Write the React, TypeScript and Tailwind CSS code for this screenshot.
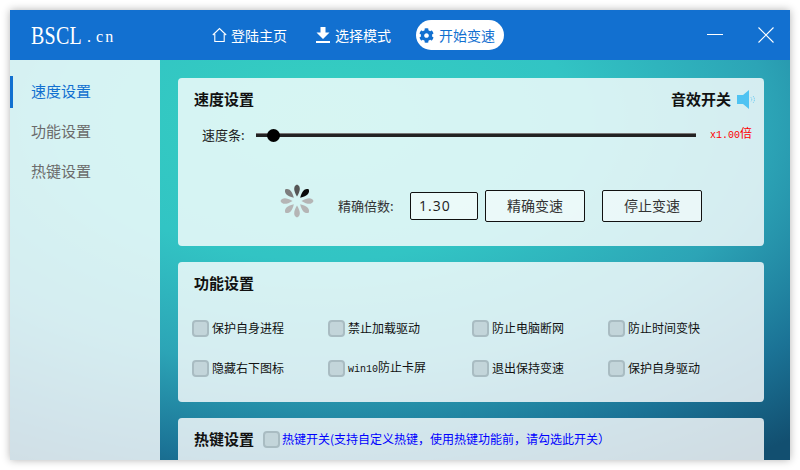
import React from "react";
import { FaCog } from "react-icons/fa";

const cjk = "font-['Microsoft_YaHei','Noto_Sans_CJK_SC',sans-serif]";

function Petals() {
  const shades = ["#555555", "#0a0a0a", "#b5b5b5", "#b5b5b5", "#b5b5b5", "#b5b5b5", "#b5b5b5", "#7d7d7d"];
  return (
    <svg width="34" height="34" viewBox="-17 -17 34 34" className="mb-[10px]">
      {shades.map((c, i) => (
        <path key={i} d="M0 -16.500 C3.500 -15 4 -11 0 -4.500 C-4 -11 -3.500 -15 0 -16.500Z" fill={c} transform={`rotate(${i * 45})`} />
      ))}
    </svg>
  );
}

function Box({ className = "" }: { className?: string }) {
  return <span className={`w-[17px] h-[17px] rounded-[4px] bg-[#c3d5da] border-2 border-[#a9bcc2] shrink-0 ${className}`} />;
}

function Check({ label }: { label: React.ReactNode }) {
  return (
    <div className="flex items-center gap-[3px] h-[18px]">
      <Box />
      <span className="text-[12px] leading-[18px] text-[#111] whitespace-nowrap">{label}</span>
    </div>
  );
}

const hotkeyText = "\u70ED\u952E\u5F00\u5173(\u652F\u6301\u81EA\u5B9A\u4E49\u70ED\u952E\uFF0C\u4F7F\u7528\u70ED\u952E\u529F\u80FD\u524D\uFF0C\u8BF7\u52FE\u9009\u6B64\u5F00\u5173\uFF09";

export default function App() {
  return (
    <div className={`w-[800px] h-[470px] bg-white p-[10px] ${cjk}`}>
      <div className="w-[780px] h-[450px] flex flex-col overflow-hidden shadow-[0_0_8px_rgba(0,0,0,0.3)]">
        <header className="h-[50px] shrink-0 bg-[#1270d0] flex items-center text-white">
          <div className="w-[190px] pl-[21px] flex items-baseline font-['Liberation_Serif',serif]">
            <span className="text-[20px] tracking-[0.25px] inline-block scale-y-[1.25]">BSCL</span>
            <span className="text-[16px] ml-[5px]">.</span>
            <span className="text-[16px] ml-[5px] tracking-[2px]">cn</span>
          </div>
          <div className="flex items-center gap-[4px] text-[14px] w-[104px] ml-[12px]">
            <svg width="15" height="16" viewBox="0 0 15 16" fill="none" stroke="white" strokeWidth="1.1">
              <path d="M.8 8 7.500 1.500 14.200 8M2.800 7v7.500h9.400V7" />
            </svg>
            <span>登陆主页</span>
          </div>
          <div className="flex items-center gap-[5px] text-[14px] w-[100px]">
            <svg width="14" height="16" viewBox="0 0 14 16" fill="white">
              <path d="M4.500 0h5v5.500h4L7 12 .5 5.500h4zM0 14h14v2H0z" />
            </svg>
            <span>选择模式</span>
          </div>
          <div className="h-[30px] w-[88px] rounded-full bg-white text-[#1270d0] flex items-center gap-[5px] pl-[3px] text-[14px]">
            <FaCog size={15} color="#1270d0" />
            <span>开始变速</span>
          </div>
          <div className="flex-1 flex items-center justify-end pr-[16px] gap-[35px]">
            <span className="w-[16px] h-px bg-white mb-[2px]" />
            <svg width="16" height="16" viewBox="0 0 16 16" stroke="white" strokeWidth="1.1">
              <path d="M.5.5l15 15M15.500.5l-15 15" />
            </svg>
          </div>
        </header>
        <div className="flex-1 min-h-0 flex bg-[radial-gradient(ellipse_720px_400px_at_40%_15%,#35cfc0_0%,#32c4c4_35%,#2ca4b6_62%,#1b7396_85%,#124f70_103%)]">
          <nav className="w-[150px] shrink-0 bg-white/80 pt-[16px] text-[15px] text-[#6b6b6b] flex flex-col gap-[8px]">
            <div className="h-[32px] border-l-[3px] border-[#1270d0] pl-[18px] pb-[2px] flex items-center text-[#1270d0]">速度设置</div>
            <div className="h-[32px] pl-[21px] pb-[2px] flex items-center">功能设置</div>
            <div className="h-[32px] pl-[21px] pb-[2px] flex items-center">热键设置</div>
          </nav>
          <main className="flex-1 min-w-0 pt-[18px] pl-[18px] pr-[26px] flex flex-col gap-[16px]">
            <section className="h-[168px] shrink-0 rounded-[4px] bg-white/80 pt-[10px] pl-[16px] pr-[8px] flex flex-col">
              <div className="flex items-center justify-between">
                <h2 className="text-[15px] font-bold text-[#111] leading-[22px]">速度设置</h2>
                <div className="flex items-center gap-[6px]">
                  <span className="text-[15px] font-bold text-[#111]">音效开关</span>
                  <svg width="19" height="19" viewBox="0 0 19 19" fill="#4fc3f2">
                    <path d="M0 5h6l6-5v19l-6-5H0z" />
                    <path d="M14 7.500a3 3 0 0 1 0 4M16 6a5 5 0 0 1 0 7" fill="none" stroke="#4fc3f2" strokeWidth="1" strokeDasharray="1 1" />
                  </svg>
                </div>
              </div>
              <div className="flex items-center mt-[14px] pl-[8px] h-[20px]">
                <span className="text-[13px] text-[#222] w-[54px] whitespace-nowrap">速度条:</span>
                <div className="relative w-[440px] h-[4px] bg-[#222] border-t border-[#777] shrink-0">
                  <span className="absolute left-[11px] top-[-5px] w-[13px] h-[13px] rounded-full bg-black" />
                </div>
                <span className="ml-[14px] text-[10px] text-[#ff0000] whitespace-nowrap font-['Liberation_Mono','Noto_Sans_CJK_SC',monospace]">x1.00<span className="text-[12px]">倍</span></span>
              </div>
              <div className="flex items-center mt-[39px] pl-[86px]">
                <Petals />
                <span className="ml-[24px] text-[13px] text-[#333] w-[72px] whitespace-nowrap">精确倍数:</span>
                <span className="w-[68px] h-[28px] border border-[#111] rounded-[2px] bg-white/50 text-[14px] text-[#222] tracking-[1px] pl-[8px] flex items-center font-['Open_Sans',sans-serif]">1.30</span>
                <button className="ml-[7px] w-[100px] h-[32px] border border-[#111] rounded-[2px] bg-white/50 text-[14px] text-[#333]">精确变速</button>
                <button className="ml-[17px] w-[100px] h-[32px] border border-[#111] rounded-[2px] bg-white/50 text-[14px] text-[#333]">停止变速</button>
              </div>
            </section>
            <section className="h-[140px] shrink-0 rounded-[4px] bg-white/80 pt-[10px] px-[14px]">
              <h2 className="pl-[2px] text-[15px] font-bold text-[#111] leading-[22px]">功能设置</h2>
              <div className="mt-[25px] grid grid-cols-[136px_144px_136px_1fr] gap-y-[22px]">
                <Check label="保护自身进程" />
                <Check label="禁止加载驱动" />
                <Check label="防止电脑断网" />
                <Check label="防止时间变快" />
                <Check label="隐藏右下图标" />
                <Check label={<><span className="text-[10px] font-['Liberation_Mono',monospace]">win10</span>防止卡屏</>} />
                <Check label="退出保持变速" />
                <Check label="保护自身驱动" />
              </div>
            </section>
            <section className="h-[60px] shrink-0 rounded-[4px] bg-white/80 pt-[10px] px-[16px]">
              <div className="flex items-center">
                <h2 className="text-[15px] font-bold text-[#111] leading-[22px]">热键设置</h2>
                <Box className="ml-[9px]" />
                <span className="ml-[2px] text-[12px] text-[#0000ff] whitespace-nowrap">{hotkeyText}</span>
              </div>
            </section>
          </main>
        </div>
      </div>
    </div>
  );
}
